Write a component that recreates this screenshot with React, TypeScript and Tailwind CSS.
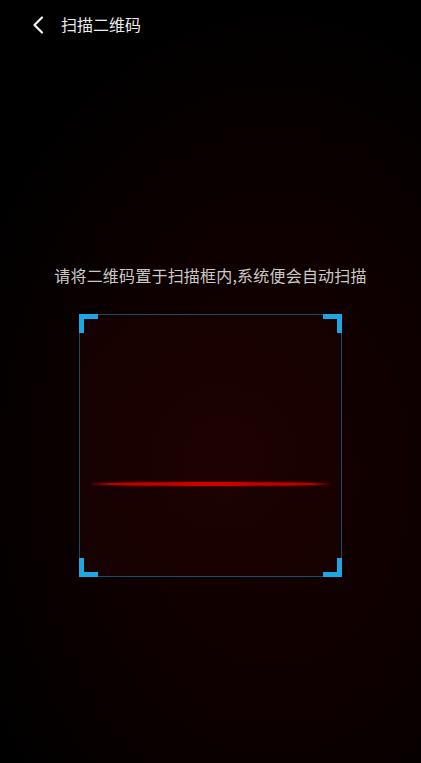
import React from 'react';

const Corner = ({ className }: { className: string }) => (
  <div className={`absolute h-[19px] w-[19px] border-[#1aa7e4] ${className}`} />
);

export default function App() {
  return (
    <div
      className="relative flex h-[763px] w-full flex-col overflow-hidden bg-[radial-gradient(ellipse_90%_70%_at_65%_62%,#160101_0%,#0e0000_45%,#000000_90%)] font-['Noto_Sans_CJK_SC','Noto_Sans',sans-serif]"
    >
      {/* header */}
      <div className="flex h-12 items-center pl-[32px]">
        <svg width="12" height="18" viewBox="0 0 12 18" fill="none" className="mt-[2px]">
          <polyline points="10,1.5 2.5,9 10,16.5" stroke="#f2f2f2" strokeWidth="2.2" strokeLinecap="round" strokeLinejoin="round" />
        </svg>
        <span className="ml-[17px] text-[16px] leading-6 text-[#ececec]">扫描二维码</span>
      </div>

      {/* tip */}
      <p className="mt-[215px] text-center text-[16px] leading-6 tracking-[0.2px] text-[#cacaca]">
        请将二维码置于扫描框内,系统便会自动扫描
      </p>

      {/* scan frame */}
      <div className="relative mx-auto mt-[27px] flex h-[263px] w-[263px] flex-col items-center border border-[#1c4c60] bg-[radial-gradient(ellipse_at_55%_55%,#1d0202_0%,#180101_70%,#140101_100%)] pt-[167px]">
        <Corner className="-left-px -top-px border-l-[5px] border-t-[5px]" />
        <Corner className="-right-px -top-px border-r-[5px] border-t-[5px]" />
        <Corner className="-bottom-px -left-px border-b-[5px] border-l-[5px]" />
        <Corner className="-bottom-px -right-px border-b-[5px] border-r-[5px]" />
        <div className="h-[4px] w-[240px] rounded-[50%] bg-[linear-gradient(90deg,rgba(170,0,0,0.3)_0%,#b80000_8%,#cc0202_50%,#b80000_92%,rgba(170,0,0,0.3)_100%)] shadow-[0_0_3px_0_rgba(180,0,0,0.5)]" />
      </div>
    </div>
  );
}
